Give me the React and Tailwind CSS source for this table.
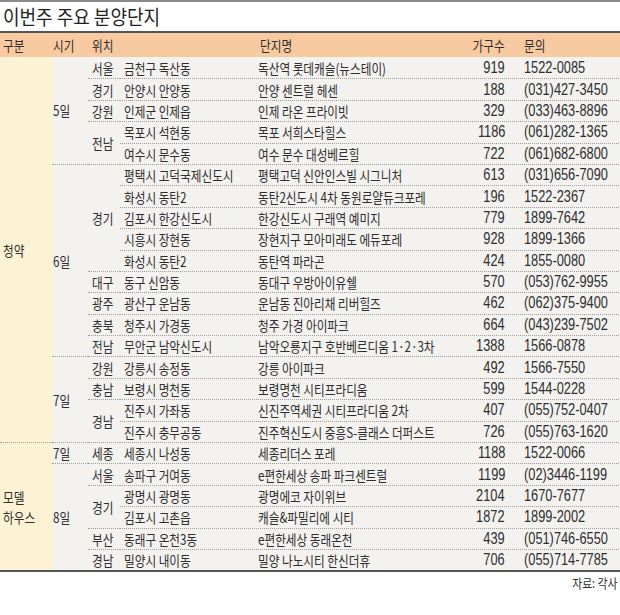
import clsx from 'clsx';

const KO = "font-['Noto_Sans_CJK_KR',sans-serif]";
const NUM = "font-['Liberation_Sans','Noto_Sans_CJK_KR',sans-serif]";
const DOT = 'border-t border-dotted border-[#9c9c9c]';

const groups = [
    {
        kind: ['청약'],
        periods: [
            {
                day: '5일',
                provinces: [
                    { p: '서울', items: [['금천구 독산동', '독산역 롯데캐슬(뉴스테이)', '919', '1522-0085']] },
                    { p: '경기', items: [['안양시 안양동', '안양 센트럴 헤센', '188', '(031)427-3450']] },
                    { p: '강원', items: [['인제군 인제읍', '인제 라온 프라이빗', '329', '(033)463-8896']] },
                    {
                        p: '전남',
                        items: [
                            ['목포시 석현동', '목포 서희스타힐스', '1186', '(061)282-1365'],
                            ['여수시 문수동', '여수 문수 대성베르힐', '722', '(061)682-6800'],
                        ],
                    },
                ],
            },
            {
                day: '6일',
                provinces: [
                    {
                        p: '경기',
                        items: [
                            ['평택시 고덕국제신도시', '평택고덕 신안인스빌 시그니처', '613', '(031)656-7090'],
                            ['화성시 동탄2', '동탄2신도시 4차 동원로얄듀크포레', '196', '1522-2367'],
                            ['김포시 한강신도시', '한강신도시 구래역 예미지', '779', '1899-7642'],
                            ['시흥시 장현동', '장현지구 모아미래도 에듀포레', '928', '1899-1366'],
                            ['화성시 동탄2', '동탄역 파라곤', '424', '1855-0080'],
                        ],
                    },
                    { p: '대구', items: [['동구 신암동', '동대구 우방아이유쉘', '570', '(053)762-9955']] },
                    { p: '광주', items: [['광산구 운남동', '운남동 진아리채 리버힐즈', '462', '(062)375-9400']] },
                    { p: '충북', items: [['청주시 가경동', '청주 가경 아이파크', '664', '(043)239-7502']] },
                    { p: '전남', items: [['무안군 남악신도시', '남악오룡지구 호반베르디움 1·2·3차', '1388', '1566-0878']] },
                ],
            },
            {
                day: '7일',
                provinces: [
                    { p: '강원', items: [['강릉시 송정동', '강릉 아이파크', '492', '1566-7550']] },
                    { p: '충남', items: [['보령시 명천동', '보령명천 시티프라디움', '599', '1544-0228']] },
                    {
                        p: '경남',
                        items: [
                            ['진주시 가좌동', '신진주역세권 시티프라디움 2차', '407', '(055)752-0407'],
                            ['진주시 충무공동', '진주혁신도시 중흥S-클래스 더퍼스트', '726', '(055)763-1620'],
                        ],
                    },
                ],
            },
        ],
    },
    {
        kind: ['모델', '하우스'],
        periods: [
            {
                day: '7일',
                provinces: [{ p: '세종', items: [['세종시 나성동', '세종리더스 포레', '1188', '1522-0066']] }],
            },
            {
                day: '8일',
                provinces: [
                    { p: '서울', items: [['송파구 거여동', 'e편한세상 송파 파크센트럴', '1199', '(02)3446-1199']] },
                    {
                        p: '경기',
                        items: [
                            ['광명시 광명동', '광명에코 자이위브', '2104', '1670-7677'],
                            ['김포시 고촌읍', '캐슬&파밀리에 시티', '1872', '1899-2002'],
                        ],
                    },
                    { p: '부산', items: [['동래구 온천3동', 'e편한세상 동래온천', '439', '(051)746-6550']] },
                    { p: '경남', items: [['밀양시 내이동', '밀양 나노시티 한신더휴', '706', '(055)714-7785']] },
                ],
            },
        ],
    },
];

// condensed text: the source uses a narrow face, so squeeze horizontally
function T({ children, right, num }) {
    return (
        <span
            className={clsx(
                'inline-block whitespace-nowrap',
                right ? 'origin-right' : 'origin-left',
                num ? 'scale-x-[0.8]' : 'scale-x-[0.83]'
            )}
        >
            {children}
        </span>
    );
}

export default function App() {
    let row = 0;

    const renderItem = (it) => {
        const first = row === 0;
        row += 1;
        return (
            <div key={row} className={clsx('flex h-[21.4px] items-center', !first && DOT)}>
                <div className={clsx('w-[133px] shrink-0 pl-[4px] text-[14px]', KO)}>
                    <T>{it[0]}</T>
                </div>
                <div className={clsx('w-[202px] shrink-0 pl-[5px] text-[14px]', KO)}>
                    <T>{it[1]}</T>
                </div>
                <div className={clsx('w-[52px] shrink-0 pr-[2px] text-right text-[16px]', NUM)}>
                    <T right num>{it[2]}</T>
                </div>
                <div className={clsx('flex-1 pl-[17px] text-[16px]', NUM)}>
                    <T num>{it[3]}</T>
                </div>
            </div>
        );
    };

    const renderProvince = (pv, i) => {
        const first = row === 0;
        return (
            <div key={i} className="flex">
                <div className={clsx('flex w-[32px] shrink-0 items-center pl-[4px] text-[14px]', KO, !first && DOT)}>
                    <T>{pv.p}</T>
                </div>
                <div className="flex flex-1 flex-col">{pv.items.map(renderItem)}</div>
            </div>
        );
    };

    const renderPeriod = (pd, i) => {
        const first = row === 0;
        return (
            <div key={i} className="flex">
                <div className={clsx('flex w-[36px] shrink-0 items-center pl-[1px] text-[14px]', KO, !first && DOT)}>
                    <T>{pd.day}</T>
                </div>
                <div className="flex flex-1 flex-col">{pd.provinces.map(renderProvince)}</div>
            </div>
        );
    };

    const renderGroup = (g, i) => {
        const first = row === 0;
        return (
            <div key={i} className="flex">
                <div
                    className={clsx(
                        'flex w-[52px] shrink-0 flex-col justify-center bg-[#fdf2d3] pl-[3px] text-[14px] leading-[20px]',
                        KO,
                        !first && DOT
                    )}
                >
                    {g.kind.map((k) => (
                        <div key={k}>
                            <T>{k}</T>
                        </div>
                    ))}
                </div>
                <div className="flex flex-1 flex-col">{g.periods.map(renderPeriod)}</div>
            </div>
        );
    };

    return (
        <div className="h-[615px] w-[620px] overflow-hidden bg-white text-[#2e2e2e] leading-[18px]">
            <div className="h-[2px] bg-[#8a8a8a]" />
            <div className={clsx('flex h-[29px] items-center pl-[3px] text-[20px] leading-[24px] text-[#222]', KO)}>
                <span className="inline-block origin-left scale-x-[0.9] whitespace-nowrap">이번주 주요 분양단지</span>
            </div>
            <div className="border-t-2 border-[#555]">
                <div className={clsx('flex h-[24px] items-center bg-[#f8caa1] text-[14px]', KO)}>
                    <div className="w-[52px] shrink-0 pl-[3px]">
                        <T>구분</T>
                    </div>
                    <div className="w-[36px] shrink-0 pl-[1px]">
                        <T>시기</T>
                    </div>
                    <div className="w-[165px] shrink-0 pl-[4px]">
                        <T>위치</T>
                    </div>
                    <div className="w-[202px] shrink-0 pl-[7px]">
                        <T>단지명</T>
                    </div>
                    <div className="w-[52px] shrink-0 pr-[2px] text-right">
                        <T right>가구수</T>
                    </div>
                    <div className="flex-1 pl-[17px]">
                        <T>문의</T>
                    </div>
                </div>
                <div className="bg-[#f3f2ef]">{groups.map(renderGroup)}</div>
            </div>
            <div className="border-t-2 border-[#555]" />
            <div className={clsx('pr-[3px] pt-[3px] text-right text-[13px] leading-[16px]', KO)}>
                <T right>자료: 각사</T>
            </div>
        </div>
    );
}
